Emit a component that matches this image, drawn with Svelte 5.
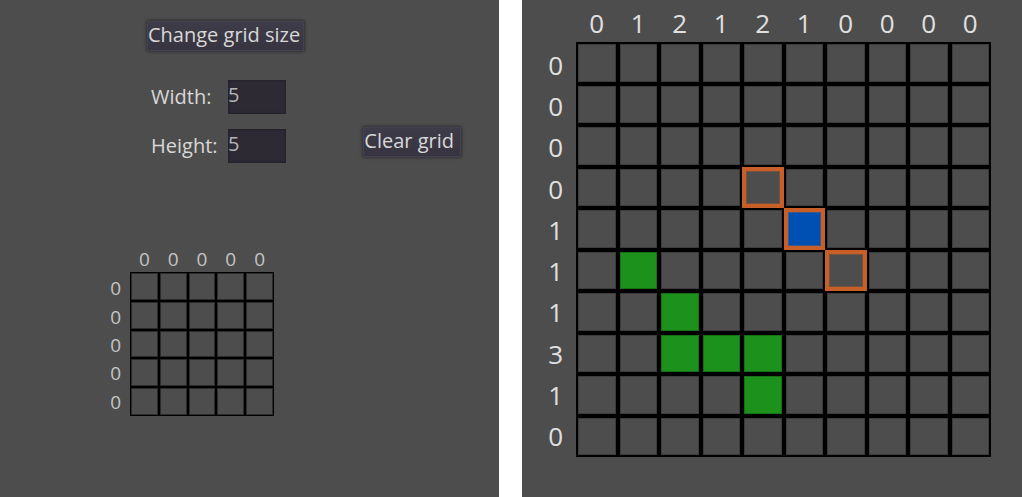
<script>
  const small = {
    columns: [0, 0, 0, 0, 0],
    rows: [0, 0, 0, 0, 0]
  };
  const large = {
    columns: [0, 1, 2, 1, 2, 1, 0, 0, 0, 0],
    rows: [0, 0, 0, 0, 1, 1, 1, 3, 1, 0]
  };

  let width = $state('5');
  let height = $state('5');
  let marks = $state({
    '3-4': 'outlined',
    '4-5': 'outlined blue',
    '5-6': 'outlined',
    '5-1': 'green',
    '6-2': 'green',
    '7-2': 'green',
    '7-3': 'green',
    '7-4': 'green',
    '8-4': 'green'
  });
</script>

{#snippet board(data, size, filled)}
  <div class="board {size}" style="--columns: {data.columns.length}">
    <div class="top">
      {#each data.columns as count}<span>{count}</span>{/each}
    </div>
    <div class="side">
      {#each data.rows as count}<span>{count}</span>{/each}
    </div>
    <div class="cells">
      {#each data.rows as _, r}
        {#each data.columns as _, c}
          <button class="cell {filled[`${r}-${c}`] ?? ''}" aria-label="Row {r + 1}, column {c + 1}"></button>
        {/each}
      {/each}
    </div>
  </div>
{/snippet}

<main>
  <section class="panel settings">
    <form onsubmit={(e) => e.preventDefault()}>
      <button class="action change">Change grid size</button>
      <label for="grid-width">Width:</label>
      <input id="grid-width" bind:value={width} />
      <label for="grid-height">Height:</label>
      <input id="grid-height" bind:value={height} />
      <button type="button" class="action clear">Clear grid</button>
    </form>
    {@render board(small, 'small', {})}
  </section>
  <section class="panel play">
    {@render board(large, 'large', marks)}
  </section>
</main>

<style>
  :global(body) {
    background: #fff;
  }

  main {
    display: grid;
    grid-template-columns: 499fr 500fr;
    gap: 23px;
    min-height: 100vh;
    font-family: "Open Sans", "Noto Sans", sans-serif;
    font-size: 20px;
    line-height: 28px;
    color: #d8d8d8;
  }

  .panel {
    background: #4d4d4d;
    box-sizing: border-box;
    min-width: 0;
  }

  .settings {
    padding: 20px 38px 20px 104px;
  }

  form {
    display: grid;
    grid-template-columns: 77px 58px 1fr;
    grid-template-rows: 45px 34px 34px;
    row-gap: 15px;
    padding-left: 47px;
    align-items: center;
  }

  label {
    grid-column: 1;
  }

  .action {
    height: 30px;
    padding: 0 3px 3px 0;
    border: 1px solid #454253;
    border-radius: 2px;
    background: linear-gradient(#3f3c4a, #373440);
    box-shadow: 0 0 3px 1px #303030;
    font: inherit;
    line-height: 24px;
    color: #d8d8d8;
    white-space: nowrap;
  }

  .change {
    grid-column: 1 / -1;
    place-self: start;
    margin-top: 1px;
    margin-left: -4px;
  }

  .clear {
    place-self: start end;
    margin-top: -2px;
    padding-right: 6px;
  }

  input {
    box-sizing: border-box;
    width: 100%;
    height: 34px;
    padding: 0 0 6px;
    border: 0;
    border-radius: 1px;
    background: #2d2a34;
    box-shadow: inset 0 0 2px 1px #222028;
    font: inherit;
    color: #b4b4b4;
  }

  .board {
    display: grid;
    grid-template-columns: var(--side) var(--size);
    grid-template-rows: var(--top) var(--size);
  }

  .small {
    --side: 26px;
    --top: 26px;
    --size: 144px;
    margin-top: 83px;
    font-size: 19px;
    line-height: 26px;
    color: #c4c4c4;
  }

  .large {
    --side: 54px;
    --top: 42px;
    --size: 415px;
    font-size: 26px;
    line-height: 46px;
    color: #e0e0e0;
  }

  .top {
    grid-column: 2;
    display: grid;
    grid-template-columns: repeat(var(--columns), 1fr);
    text-align: center;
  }

  .side {
    display: grid;
    grid-auto-rows: 1fr;
    align-items: center;
    padding-top: 2px;
    padding-right: 9px;
  }

  .side span {
    line-height: 20px;
    text-align: right;
  }

  .large .side {
    padding-right: 13px;
  }

  .cells {
    display: grid;
    grid-template-columns: repeat(var(--columns), 1fr);
    grid-auto-rows: 1fr;
  }

  .cell {
    min-width: 0;
    padding: 0;
    border: 1px solid #000;
    background: #4d4d4d;
    box-shadow: inset 0 0 0 1px #2b2b2b;
  }

  .large .cell {
    border-width: 2px;
    box-shadow: inset 0 0 0 1px #3c3c3c;
  }

  .large .green {
    background: #1c911c;
    box-shadow: inset 0 0 0 1px #167016;
  }

  .large .outlined {
    border: 4px solid #c85f28;
    box-shadow: inset 0 0 0 1px #70543f;
  }

  .large .blue {
    background: #0050b4;
    box-shadow: inset 0 0 0 1px #405888;
  }
</style>
